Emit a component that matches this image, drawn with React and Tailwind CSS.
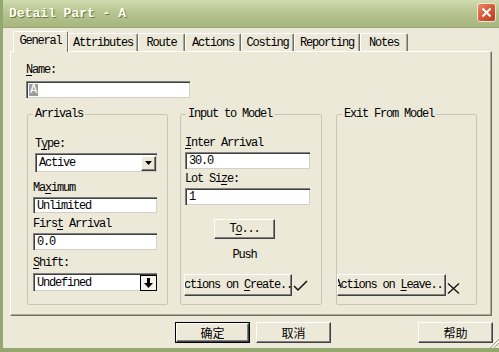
import React from 'react';

const mono = "font-['Liberation_Mono','DejaVu_Sans_Mono',monospace] text-[12px] tracking-[-1.2px] leading-[12px]";
const cjk = "font-['Noto_Sans_CJK_SC','Noto_Sans',sans-serif] text-[12px]";

const sunken = "bg-white border-t border-l border-[#808080] border-r-white border-b-white shadow-[inset_1px_1px_0_#404040,inset_-1px_-1px_0_#D4D0C8]";
const raised = "bg-[#ECE9D8] border-t border-l border-white border-r border-b border-r-[#404040] border-b-[#404040] shadow-[inset_-1px_-1px_0_#808080]";

const U = ({ children }) => <span className="underline underline-offset-[2px]">{children}</span>;

const Label = ({ className = '', children }) => (
  <div className={`${mono} h-[12px] whitespace-nowrap ${className}`}>{children}</div>
);

const TextBox = ({ value, className = '' }) => (
  <div className={`${sunken} ${mono} flex items-center pl-[3px] ${className}`}>{value}</div>
);

const Tab = ({ label, w, active }) => (
  active ? (
    <div className={`${mono} relative z-10 h-[21px] -mb-[1px] bg-[#ECE9D8] border-t border-l border-white border-r border-r-[#716F64] rounded-t-[2px] flex items-center justify-center pb-[2px]`} style={{ width: w }}>
      {label}
    </div>
  ) : (
    <div className={`${mono} h-[18px] bg-[#ECE9D8] border-t border-l border-white border-r border-r-[#716F64] shadow-[inset_-1px_0_0_#ACA899] rounded-t-[2px] flex items-center justify-center pt-[1px]`} style={{ width: w }}>
      {label}
    </div>
  )
);

const Group = ({ title, w, children }) => (
  <fieldset className="h-[197px] border border-[#C9C6B4] rounded-[2px] min-w-0" style={{ width: w }}>
    <legend className={`${mono} ml-[5px] px-[2px]`}>{title}</legend>
    <div className="flex flex-col">{children}</div>
  </fieldset>
);

const Check = () => (
  <svg width="15" height="12" viewBox="0 0 15 12" className="ml-[1px] mt-[6px]">
    <polyline points="1,6 5,10 14,1" fill="none" stroke="#111" strokeWidth="1.5" />
  </svg>
);

const Cross = () => (
  <svg width="13" height="11" viewBox="0 0 13 11" className="ml-[1px] mt-[9px]">
    <line x1="1" y1="0.5" x2="12" y2="10.5" stroke="#111" strokeWidth="1.3" />
    <line x1="12" y1="0.5" x2="1" y2="10.5" stroke="#111" strokeWidth="1.3" />
  </svg>
);

export default function App() {
  return (
    <div className="relative w-[499px] h-[352px] overflow-hidden bg-[#ECE9D8] border-l-[3px] border-b-[4px] border-[#93A76F] flex flex-col text-black">
      {/* title bar */}
      <div className="h-[28px] shrink-0 flex items-center justify-between pl-[6px] pr-[3px] bg-gradient-to-b from-[#D2DBB0] via-[#B5C38E] to-[#A7B67F] border-b border-[#98A672]">
        <span className="font-['Liberation_Mono',monospace] font-bold text-[13px] text-[#FFFFEE] [text-shadow:1px_1px_0_#69764A] mt-[1px]">Detail Part - A</span>
        <div className="w-[19px] h-[19px] rounded-[3px] border border-[#F4E6DA] bg-gradient-to-br from-[#E98A66] via-[#D75A35] to-[#B73E1C] flex items-center justify-center mb-[3px]">
          <svg width="11" height="11" viewBox="0 0 11 11">
            <line x1="1.5" y1="1.5" x2="9.5" y2="9.5" stroke="#fff" strokeWidth="2" />
            <line x1="9.5" y1="1.5" x2="1.5" y2="9.5" stroke="#fff" strokeWidth="2" />
          </svg>
        </div>
      </div>

      {/* tabs */}
      <div className="mt-[3px] h-[20px] pl-[10px] flex items-end">
        <Tab label="General" w={55} active />
        <Tab label="Attributes" w={70} />
        <Tab label="Route" w={47} />
        <Tab label="Actions" w={56} />
        <Tab label="Costing" w={53} />
        <Tab label="Reporting" w={66} />
        <Tab label="Notes" w={48} />
      </div>

      {/* panel */}
      <div className="ml-[7px] w-[482px] h-[265px] shrink-0 border-t border-l border-white border-r border-b border-r-[#716F64] border-b-[#716F64] shadow-[inset_-1px_-1px_0_#ACA899] flex flex-col">
        <Label className="ml-[15px] mt-[12px]"><U>N</U>ame:</Label>
        <div className={`${sunken} ml-[15px] mt-[5px] w-[164px] h-[17px] flex items-center pl-[2px]`}>
          <span className={`${mono} bg-[#9C9C9C] text-white px-[1px] tracking-normal`}>A</span>
        </div>

        <div className="ml-[16px] mt-[10px] flex">
          {/* Arrivals */}
          <Group title="Arrivals" w={141}>
            <Label className="ml-[7px] mt-[18px]">T<U>y</U>pe:</Label>
            <div className={`${sunken} ml-[7px] mt-[3px] w-[122px] h-[19px] flex items-center`}>
              <span className={`${mono} ml-[3px] flex-1`}>Active</span>
              <div className={`${raised} w-[15px] h-[15px] mr-[1px] flex items-center justify-center`}>
                <svg width="7" height="4" viewBox="0 0 7 4"><polygon points="0,0 7,0 3.5,4" fill="#000" /></svg>
              </div>
            </div>
            <Label className="ml-[5px] mt-[10px]">Ma<U>x</U>imum</Label>
            <TextBox value="Unlimited" className="ml-[5px] mt-[3px] w-[124px] h-[16px]" />
            <Label className="ml-[5px] mt-[5px]">Firs<U>t</U> Arrival</Label>
            <TextBox value="0.0" className="ml-[5px] mt-[3px] w-[124px] h-[17px]" />
            <Label className="ml-[5px] mt-[7px]"><U>S</U>hift:</Label>
            <div className={`${sunken} ml-[5px] mt-[4px] w-[124px] h-[18px] flex items-center`}>
              <span className={`${mono} ml-[3px] flex-1`}>Undefined</span>
              <div className="w-[17px] h-[16px] border border-black bg-[#F4F3EE] flex items-center justify-center">
                <svg width="9" height="10" viewBox="0 0 9 10">
                  <rect x="3" y="0" width="3" height="5" fill="#000" />
                  <polygon points="0,5 9,5 4.5,10" fill="#000" />
                </svg>
              </div>
            </div>
          </Group>

          {/* Input to Model */}
          <div className="w-[12px]" />
          <Group title="Input to Model" w={142}>
            <Label className="ml-[4px] mt-[17px]"><U>I</U>nter Arrival</Label>
            <TextBox value="30.0" className="ml-[4px] mt-[3px] w-[125px] h-[17px]" />
            <Label className="ml-[4px] mt-[4px]">Lot Si<U>z</U>e:</Label>
            <TextBox value="1" className="ml-[4px] mt-[3px] w-[125px] h-[17px]" />
            <div className={`${raised} ${mono} ml-[33px] mt-[14px] w-[61px] h-[20px] flex items-center justify-center`}>
              <span>T<U>o</U>...</span>
            </div>
            <div className={`${mono} ml-[33px] mt-[10px] w-[61px] text-center`}>Push</div>
            <div className="ml-[3px] mt-[13px] flex">
              <div className={`${raised} ${mono} w-[108px] h-[22px] overflow-hidden flex items-center justify-center whitespace-nowrap`}>
                <span className="shrink-0">Actions on <U>C</U>reate...</span>
              </div>
              <Check />
            </div>
          </Group>

          {/* Exit From Model */}
          <div className="w-[14px]" />
          <Group title="Exit From Model" w={141}>
            <div className="mt-[154px] flex">
              <div className={`${raised} ${mono} w-[109px] h-[22px] overflow-hidden flex items-center justify-center whitespace-nowrap`}>
                <span className="shrink-0">Actions on <U>L</U>eave...</span>
              </div>
              <Cross />
            </div>
          </Group>
        </div>
      </div>

      {/* dialog buttons */}
      <div className="mt-[6px] flex">
        <div className="ml-[172px] w-[75px] h-[21px] border border-black">
          <div className={`${raised} ${cjk} w-full h-full flex items-center justify-center`}>确定</div>
        </div>
        <div className={`${raised} ${cjk} ml-[6px] w-[75px] h-[21px] flex items-center justify-center`}>取消</div>
        <div className={`${raised} ${cjk} ml-[87px] w-[75px] h-[21px] flex items-center justify-center`}>帮助</div>
      </div>

      {/* size grip */}
      <svg width="12" height="12" viewBox="0 0 12 12" className="absolute right-0 bottom-0">
        <line x1="11" y1="2" x2="2" y2="11" stroke="#fff" strokeWidth="1" />
        <line x1="12" y1="3" x2="3" y2="12" stroke="#A09E8F" strokeWidth="1" />
        <line x1="11" y1="6" x2="6" y2="11" stroke="#fff" strokeWidth="1" />
        <line x1="12" y1="7" x2="7" y2="12" stroke="#A09E8F" strokeWidth="1" />
      </svg>
    </div>
  );
}
